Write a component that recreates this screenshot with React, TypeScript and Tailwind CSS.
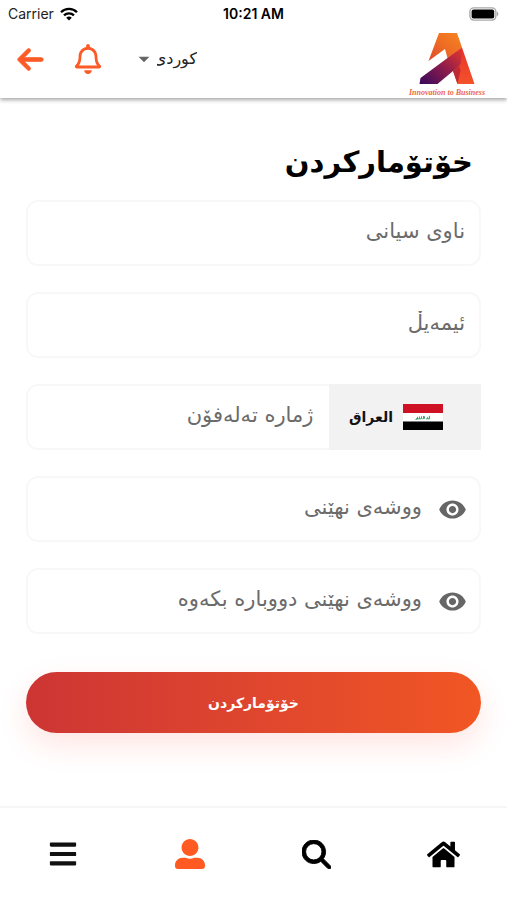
import React, { useState } from "react";
import { FaBars, FaHome, FaRegBell, FaUserAlt } from "react-icons/fa";
import { FaArrowLeft, FaMagnifyingGlass } from "react-icons/fa6";
import { MdArrowDropDown, MdVisibility } from "react-icons/md";

const fieldClass =
  "flex h-[66px] w-full items-center rounded-xl border-2 border-[#f8f8f8] bg-white";
const inputClass =
  "h-full w-full min-w-0 flex-1 bg-transparent pb-1 text-right text-[21px] text-black outline-none placeholder:text-[#6b6b6b]";

const StatusBar: React.FC = () => (
  <div className="grid h-7 grid-cols-3 items-center px-2 font-['Inter',sans-serif] text-sm text-[#222]">
    <div className="flex items-center gap-1.5">
      <span>Carrier</span>
      <svg width="18" height="14" viewBox="0 0 18 14" fill="none" stroke="#000">
        <path d="M1 5.2a11.4 11.4 0 0 1 16 0" strokeWidth="2.3" />
        <path d="M4 8.4a7.2 7.2 0 0 1 10 0" strokeWidth="2.3" />
        <path d="M9 13.6 6.2 10.8a4 4 0 0 1 5.6 0z" fill="#000" stroke="none" />
      </svg>
    </div>
    <span className="text-center font-semibold text-black">10:21 AM</span>
    <svg
      className="justify-self-end"
      width="30"
      height="14"
      viewBox="0 0 30 14"
    >
      <rect x="0.9" y="0.9" width="26" height="12.2" rx="4" fill="#fff" stroke="#a8a8a8" strokeWidth="1.4" />
      <rect x="2.6" y="2.6" width="22.6" height="8.8" rx="2" fill="#000" />
      <path d="M28 4.8c1.8.6 1.8 3.8 0 4.4z" fill="#a8a8a8" />
    </svg>
  </div>
);

const Logo: React.FC = () => (
  <a href="#home" className="flex w-20 flex-col items-center gap-1 pt-1">
    <svg width="56" height="51" viewBox="0 0 56 51">
      <defs>
        <linearGradient id="logoTop" x1="0" y1="1" x2="1" y2="0">
          <stop offset="0" stopColor="#dc4a2c" />
          <stop offset="0.5" stopColor="#ee6c24" />
          <stop offset="1" stopColor="#f5861f" />
        </linearGradient>
        <linearGradient id="logoLeg" x1="0" y1="0" x2="0" y2="1">
          <stop offset="0" stopColor="#e5342a" />
          <stop offset="1" stopColor="#f4522a" />
        </linearGradient>
        <linearGradient id="logoBar" x1="0" y1="1" x2="1" y2="0">
          <stop offset="0" stopColor="#36095c" />
          <stop offset="0.5" stopColor="#8b1c4d" />
          <stop offset="1" stopColor="#e8382a" />
        </linearGradient>
      </defs>
      <path d="M20 0h18l5 14.600L28.500 25 26 16 9.500 28z" fill="url(#logoTop)" />
      <path d="M43 14.600 55.500 51h-17L34 38l-5.500-13z" fill="url(#logoLeg)" />
      <path d="M43 14.600 41.500 31 34 38 18.500 51h-18l1-6 27-20z" fill="url(#logoBar)" />
      <path d="M34 38l6-5.500 1.500 5-3 13.500z" fill="#c02a35" />
    </svg>
    <span className="whitespace-nowrap font-['Liberation_Serif',serif] text-[8px] font-bold italic leading-[10px] text-[#ee6a45]">
      Innovation to Business
    </span>
  </a>
);

const IraqFlag: React.FC = () => (
  <svg width="40" height="26" viewBox="0 0 40 26">
    <rect width="40" height="9" fill="#ce1124" />
    <rect y="9" width="40" height="8.500" fill="#fff" />
    <rect y="17.500" width="40" height="8.500" fill="#000" />
    <g fill="none" stroke="#2b9a5b" strokeWidth="0.9">
      <path d="M13 14.800h5.500v-2.600M14.500 14.800v-2M16.500 14.800v-2.300M20.500 12v2.800h-1" />
      <path d="M23 14.800h3.500v-3M24.700 14.800v-2M12.500 15.500l2-.6M21.500 12.300v2.400" />
    </g>
  </svg>
);

const Header: React.FC = () => {
  const [language, setLanguage] = useState("ku");

  return (
    <header className="bg-white shadow-[0_2px_4px_rgba(0,0,0,0.35)]">
      <StatusBar />
      <div className="flex h-[70px] items-center justify-between pl-4 pr-5">
        <div className="flex items-center pb-2">
          <button type="button" aria-label="Back" className="text-[#fc5a26]">
            <FaArrowLeft size={29} strokeWidth={16} />
          </button>
          <button
            type="button"
            aria-label="Notifications"
            className="ml-7 text-[#fc5a26]"
          >
            <FaRegBell size={30} />
          </button>
          <div className="ml-7 flex items-center">
            <MdArrowDropDown size={26} className="text-[#666]" />
            <select
              dir="rtl"
              aria-label="Language"
              value={language}
              onChange={(e) => setLanguage(e.target.value)}
              className="w-10 appearance-none bg-transparent text-base text-[#222] outline-none"
            >
              <option value="ku">کوردی</option>
            </select>
          </div>
        </div>
        <Logo />
      </div>
    </header>
  );
};

interface PasswordFieldProps {
  name: string;
  placeholder: string;
}

const PasswordField: React.FC<PasswordFieldProps> = ({ name, placeholder }) => {
  const [visible, setVisible] = useState(false);

  return (
    <div className={`${fieldClass} gap-4 pr-3`}>
      <button
        type="button"
        aria-label="Show password"
        onClick={() => setVisible(!visible)}
        className="text-[#666]"
      >
        <MdVisibility size={29} />
      </button>
      <input
        type={visible ? "text" : "password"}
        name={name}
        aria-label={placeholder}
        placeholder={placeholder}
        className={inputClass}
      />
    </div>
  );
};

const RegisterForm: React.FC = () => (
  <form
    dir="rtl"
    onSubmit={(e) => e.preventDefault()}
    className="flex flex-1 flex-col px-[26px] pt-10"
  >
    <h1 className="mb-3.5 px-2 text-[29px] font-bold leading-[48px] text-black">
      خۆتۆمارکردن
    </h1>

    <div className="flex flex-col gap-[26px]">
      <div className={`${fieldClass} px-3.5`}>
        <input
          type="text"
          name="name"
          aria-label="ناوی سیانی"
          placeholder="ناوی سیانی"
          className={inputClass}
        />
      </div>
      <div className={`${fieldClass} px-3.5`}>
        <input
          type="email"
          name="email"
          aria-label="ئیمەیڵ"
          placeholder="ئیمەیڵ"
          className={inputClass}
        />
      </div>
      <div className="flex h-[66px]">
        <button
          type="button"
          className="flex w-1/3 items-center gap-2.5 bg-[#f2f2f2] pr-[38px] text-sm font-bold text-[#111]"
        >
          <IraqFlag />
          <span>العراق</span>
        </button>
        <div className="flex flex-1 rounded-l-xl border-2 border-r-0 border-[#f8f8f8] px-4">
          <input
            type="tel"
            name="phone"
            dir="rtl"
            aria-label="ژمارە تەلەفۆن"
            placeholder="ژمارە تەلەفۆن"
            className={inputClass}
          />
        </div>
      </div>
      <PasswordField name="password" placeholder="ووشەی نهێنی" />
      <PasswordField
        name="passwordRepeat"
        placeholder="ووشەی نهێنی دووبارە بکەوە"
      />
    </div>

    <button
      type="submit"
      className="mt-[38px] h-[61px] w-full rounded-full bg-linear-to-r from-[#cd3534] to-[#f15623] text-sm font-bold text-white shadow-[0_12px_30px_rgba(255,70,50,0.14)]"
    >
      خۆتۆمارکردن
    </button>
  </form>
);

const BottomNav: React.FC = () => (
  <nav className="grid h-[94px] grid-cols-4 items-center justify-items-center border-t-2 border-[#f6f6f6] bg-white text-black">
    <a href="#menu" aria-label="Menu" className="text-[#111]">
      <FaBars size={30} />
    </a>
    <a href="#account" aria-label="Account" className="text-[#ff5a22]">
      <FaUserAlt size={30} />
    </a>
    <a href="#search" aria-label="Search">
      <FaMagnifyingGlass size={29} strokeWidth={16} />
    </a>
    <a href="#home" aria-label="Home">
      <FaHome size={33} />
    </a>
  </nav>
);

export default function App() {
  return (
    <div className="flex min-h-screen flex-col bg-white font-['DejaVu_Sans',sans-serif]">
      <Header />
      <RegisterForm />
      <BottomNav />
    </div>
  );
}
